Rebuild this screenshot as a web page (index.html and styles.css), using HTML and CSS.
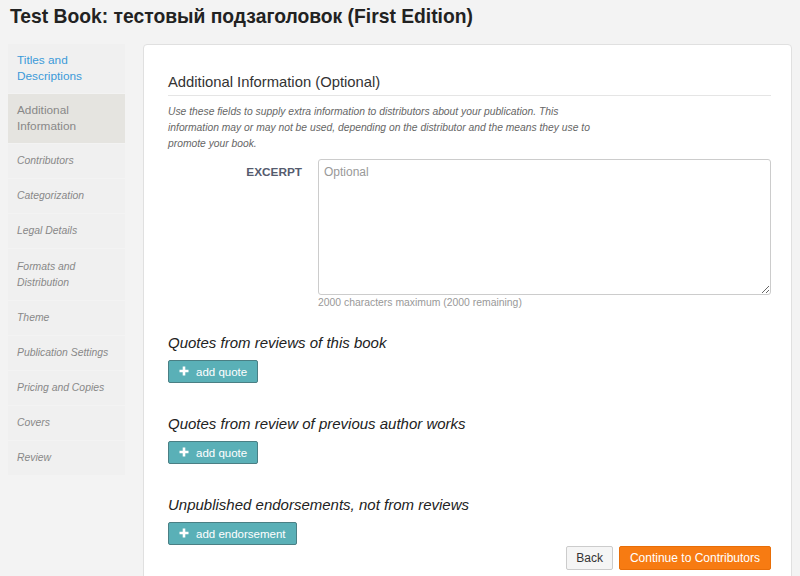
FILE: index.html
```html
<!DOCTYPE html>
<html>
<head>
    <meta charset="utf-8">
    <title>Test Book - Additional Information</title>
    <link rel="stylesheet" href="styles.css">
</head>
<body>

<h1 class="book-title">Test Book: тестовый подзаголовок (First Edition)</h1>

<div class="wrap">
	<ul class="steps">
		<li class="done"><a href="#">Titles and Descriptions</a></li>
		<li class="active"><a href="#">Additional Information</a></li>
		<li><a href="#">Contributors</a></li>
		<li><a href="#">Categorization</a></li>
		<li><a href="#">Legal Details</a></li>
		<li class="tall"><a href="#">Formats and Distribution</a></li>
		<li><a href="#">Theme</a></li>
		<li><a href="#">Publication Settings</a></li>
		<li><a href="#">Pricing and Copies</a></li>
		<li><a href="#">Covers</a></li>
		<li><a href="#">Review</a></li>
	</ul>

	<div class="panel">
		<h3 class="legend">Additional Information (Optional)</h3>
		<p class="intro">Use these fields to supply extra information to distributors about your publication. This information may or may not be used, depending on the distributor and the means they use to promote your book.</p>

		<div class="field">
			<label for="excerpt">EXCERPT</label>
			<div class="control">
				<textarea id="excerpt" placeholder="Optional"></textarea>
				<p class="help">2000 characters maximum (2000 remaining)</p>
			</div>
		</div>

		<div class="group">
			<h4>Quotes from reviews of this book</h4>
			<button class="btn-add"><svg width="10" height="10" viewBox="0 0 10 10"><path d="M5 0.5v9M0.5 5h9" stroke="#fff" stroke-width="2.6"/></svg>add quote</button>
		</div>

		<div class="group">
			<h4>Quotes from review of previous author works</h4>
			<button class="btn-add"><svg width="10" height="10" viewBox="0 0 10 10"><path d="M5 0.5v9M0.5 5h9" stroke="#fff" stroke-width="2.6"/></svg>add quote</button>
		</div>

		<div class="group">
			<h4>Unpublished endorsements, not from reviews</h4>
			<button class="btn-add"><svg width="10" height="10" viewBox="0 0 10 10"><path d="M5 0.5v9M0.5 5h9" stroke="#fff" stroke-width="2.6"/></svg>add endorsement</button>
		</div>

		<div class="actions">
			<button class="btn-back">Back</button>
			<button class="btn-next">Continue to Contributors</button>
		</div>
	</div>
</div>

</body>
</html>
```

FILE: styles.css
```css
*{ margin:0; padding:0; box-sizing: border-box;}
li{ list-style: none;}
a,a:hover{ text-decoration: none;}

body{ background:#f3f3f3; font-family: "Liberation Sans", Arial, "Noto Sans CJK SC", sans-serif; color:#333; overflow: hidden;}

.book-title{ padding:6px 10px 0; height:44px; font-size:19.3px; line-height:22px; font-weight: bold; color:#222;}

.wrap{ display: flex; align-items: flex-start; padding:0 8px; gap:18px;}

/* steps */
.steps{ width:117px; flex-shrink: 0; display: flex; flex-direction: column; gap:1px;}
.steps li{ background:#f0f0f0;}
.steps li a{ display: block; padding:9px 9px 9px; font-size:10.4px; line-height:16px; color:#888; font-style: italic;}
.steps li.tall a{ padding-top:10px;}
.steps li.done a{ padding:8px 9px 9px; font-size:11.8px; font-style: normal; color:#3b9ad9;}
.steps li.active{ background:#e5e4e0;}
.steps li.active a{ padding:8px 9px 9px; font-size:11.8px; font-style: normal; color:#888;}

/* panel */
.panel{ flex:1; min-height:560px; padding:27px 20px 0 24px; background:#fff; border:1px solid #e0e0e0; border-radius:4px;}
.legend{ padding-bottom:3px; border-bottom:1px solid #e5e5e5; font-size:14.8px; line-height:20px; font-weight: normal; color:#333;}
.intro{ max-width:430px; margin-top:8px; font-size:10.3px; line-height:16px; font-style: italic; color:#666;}

.field{ display: flex; margin-top:7px;}
.field label{ width:150px; flex-shrink: 0; padding:6px 16px 0 0; text-align: right; font-size:11.8px; font-weight: bold; color:#555b6e;}
.field .control{ flex:1;}
.field textarea{ display: block; width:100%; height:136px; padding:5px 5px; border:1px solid #ccc; border-radius:3px; font-family: inherit; font-size:12px; color:#333; resize: vertical;}
.field textarea::placeholder{ color:#999;}
.help{ margin-top:1px; font-size:10.4px; line-height:14px; color:#999;}

.group{ margin-top:31px;}
.field + .group{ margin-top:23px;}
.group h4{ font-size:15px; line-height:20px; font-weight: normal; font-style: italic; color:#222;}

.btn-add{ display: inline-flex; align-items: center; gap:7px; height:23px; margin-top:7px; padding:0 10px; background:#5ab0b7; border:1px solid #4a7f84; border-radius:2px; font-family: inherit; font-size:11.5px; color:#fff; cursor: pointer;}
.btn-add svg{ margin-top:-1px;}
.group:last-of-type .btn-add{ margin-top:8px;}

.actions{ display: flex; justify-content: flex-end; gap:6px; margin-top:1px;}
.actions button{ height:24px; padding:0 10px; border-radius:2px; font-family: inherit; font-size:12px; cursor: pointer;}
.actions .btn-back{ padding:0 9px; background:#f5f5f5; border:1px solid #ccc; color:#333;}
.btn-next{ background:#f77b12; border:1px solid #e86e08; color:#fff;}
```
